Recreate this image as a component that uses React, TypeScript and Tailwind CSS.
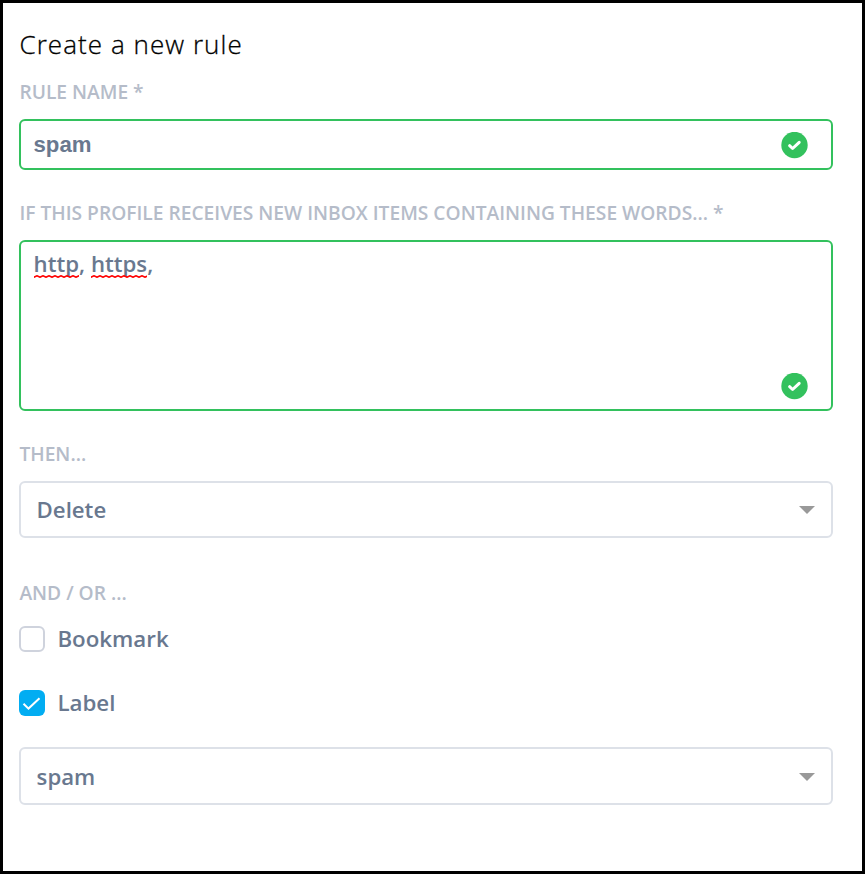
import React from 'react';
import clsx from 'clsx';

type Rule = {
  name: string;
  words: string[];
  action: string;
  bookmark: boolean;
  label: boolean;
  labelName: string;
};

const rule: Rule = {
  name: 'spam',
  words: ['http', 'https'],
  action: 'Delete',
  bookmark: false,
  label: true,
  labelName: 'spam',
};

function FieldLabel({ children, className }: { children: React.ReactNode; className?: string }) {
  return (
    <div className={clsx('h-6 whitespace-nowrap pl-[0.4px] text-[19.2px] font-semibold leading-[23px] text-[#b5bcc9]', className)}>{children}</div>
  );
}

function ValidIcon({ className }: { className?: string }) {
  return (
    <svg className={clsx('h-[27px] w-[27px] shrink-0', className)} viewBox="0 0 27 27" fill="none">
      <circle cx="13.5" cy="13" r="13.2" fill="#33c15d" />
      <path d="M8.6 13.7l3 2.8 6.6-6.2" stroke="#fff" strokeWidth="3" strokeLinecap="round" strokeLinejoin="round" />
    </svg>
  );
}

function Misspelled({ word }: { word: string }) {
  return (
    <span className="relative inline-block">
      {word}
      <svg className="absolute left-0 top-[26px] h-[3px] w-full">
        <defs>
          <pattern id={`squiggle-${word}`} width="6" height="3" patternUnits="userSpaceOnUse">
            <path d="M-3 .8L0 2.2 3 .8 6 2.2 9 .8" stroke="#f00" strokeWidth="1.6" fill="none" />
          </pattern>
        </defs>
        <rect width="100%" height="3" fill={`url(#squiggle-${word})`} />
      </svg>
    </span>
  );
}

function Select({ value, className }: { value: string; className?: string }) {
  return (
    <button
      type="button"
      className={clsx('flex w-full items-center justify-between rounded-md border-2 border-[#dde1e8] pl-[15.6px] pr-4 text-left', className)}
    >
      <span className="text-[22.2px] font-semibold leading-[30px]">{value}</span>
      <svg className="h-2 w-4" viewBox="0 0 16 8">
        <path d="M0 0h16L8 8z" fill="#999" />
      </svg>
    </button>
  );
}

function CheckRow({ text, checked }: { text: string; checked: boolean }) {
  return (
    <div className="flex h-[26px] items-center gap-[12.4px]">
      <span
        role="checkbox"
        aria-checked={checked}
        className={clsx('flex h-[26px] w-[26px] items-center justify-center rounded-md', checked ? 'bg-[#02adf2]' : 'border-2 border-[#cfd3dd]')}
      >
        {checked ? (
          <svg className="h-[26px] w-[26px]" viewBox="0 0 26 26" fill="none">
            <path d="M4.5 13.8l5 4.8L20.5 8.3" stroke="#fff" strokeWidth="2" />
          </svg>
        ) : null}
      </span>
      <span className="text-[22.3px] font-semibold leading-[26px]">{text}</span>
    </div>
  );
}

export default function App() {
  return (
    <div className="h-[874px] w-[865px] overflow-hidden border-[3px] border-black bg-white pl-4 pr-[29px] pt-[23px] font-['Open_Sans',sans-serif] text-[#69788f]">
      <h1 className="h-9 whitespace-nowrap pl-[0.5px] text-[26px] font-light leading-9 tracking-[1.05px] text-black [-webkit-text-stroke:0.3px_black]">Create a new rule</h1>

      <FieldLabel className="mt-[18px]">RULE NAME *</FieldLabel>
      <div className="mt-[15px] flex h-[51px] items-center justify-between rounded-md border-2 border-[#33c15d] pl-[12.5px] pr-[23px]">
        <span className="font-['Liberation_Sans',sans-serif] text-[22.2px] font-bold leading-[30px]">{rule.name}</span>
        <ValidIcon className="mt-0.5" />
      </div>

      <FieldLabel className="mt-[31px]">IF THIS PROFILE RECEIVES NEW INBOX ITEMS CONTAINING THESE WORDS... *</FieldLabel>
      <div className="mt-[15px] flex h-[171px] items-end justify-between rounded-md border-2 border-[#33c15d] pb-[9px] pl-[12.6px] pr-[23px]">
        <div className="self-start pt-[7px] text-[22.2px] font-semibold leading-[30px]">
          {rule.words.map((word, i) => (
            <React.Fragment key={word}>
              {i > 0 ? ' ' : null}
              <Misspelled word={word} />,
            </React.Fragment>
          ))}
        </div>
        <ValidIcon />
      </div>

      <FieldLabel className="mt-[31px]">THEN...</FieldLabel>
      <Select value={rule.action} className="mt-[15px] h-[57px] pt-px" />

      <FieldLabel className="mt-[43px]">AND / OR ...</FieldLabel>
      <div className="mt-[21px] flex flex-col gap-[38px]">
        <CheckRow text="Bookmark" checked={rule.bookmark} />
        <CheckRow text="Label" checked={rule.label} />
      </div>
      <Select value={rule.labelName} className="mt-[31px] h-[58px] pt-[2px]" />
    </div>
  );
}
